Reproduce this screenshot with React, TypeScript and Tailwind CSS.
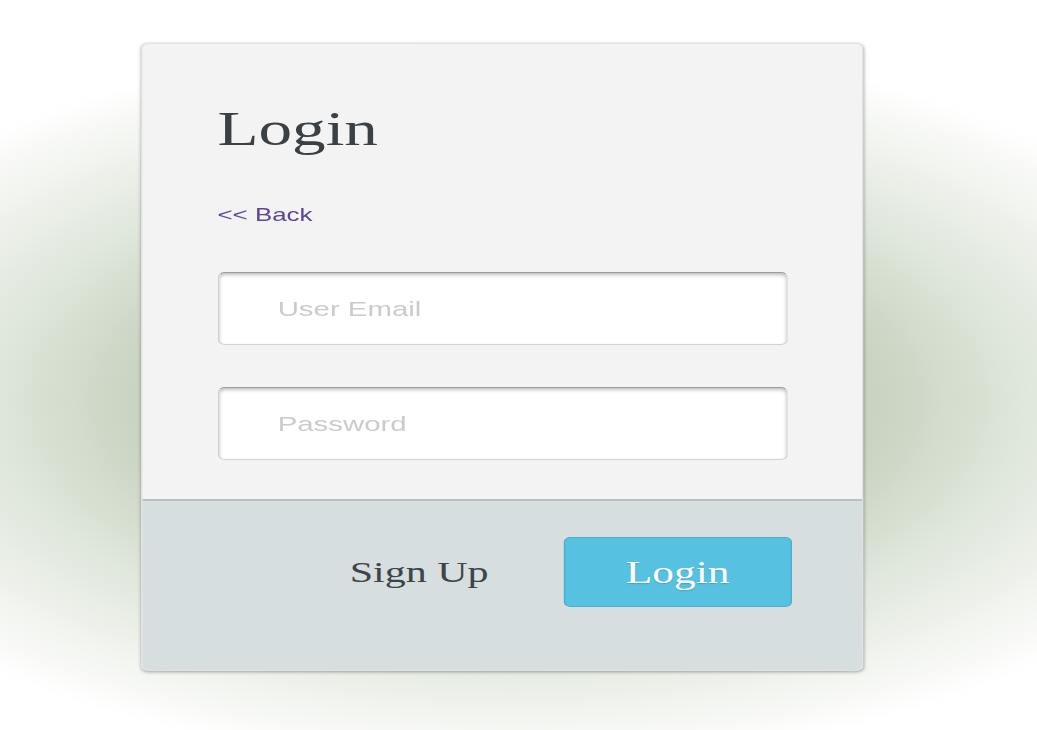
import React from "react";

const serif = { fontFamily: '"Liberation Serif", "Times New Roman", serif' };
const sans = { fontFamily: '"Liberation Sans", Arial, sans-serif' };

function Field({ placeholder, type }: { placeholder: string; type: string }) {
  return (
    <input
      type={type}
      placeholder={placeholder}
      className="block w-full h-[73px] rounded-[5px] border border-[#d2d2d2] border-t-[#9c9c9c] bg-white pl-[42px] text-[21px] text-[#555] shadow-[inset_0_2px_3px_rgba(0,0,0,0.25)] outline-none placeholder:text-[#cbcbcb]"
      style={sans}
    />
  );
}

export default function App() {
  return (
    <div className="w-[1037px] h-[730px] overflow-hidden bg-white bg-[radial-gradient(ellipse_74%_50%_at_49%_55%,#b2c3a6_0%,#c9d3c1_48%,#e0e7dc_68%,#f4f6f2_88%,#ffffff_100%)] pt-[43px] pl-[141px]">
      <div className="w-[516.4px] h-[628px] origin-top-left scale-x-[1.4] rounded-[5px] border border-[#e2e2e2] bg-[#f3f3f3] shadow-[0_1px_3px_rgba(0,0,0,0.35)] overflow-hidden flex flex-col">
        <div className="h-[455px] px-[53.6px] pt-[61px]">
          <h1 className="text-[48px] leading-[48px] text-[#3b4045]" style={serif}>
            Login
          </h1>
          <a href="#" className="block mt-[52px] text-[18.5px] leading-[20px] text-[#5e4594]" style={sans}>
            &lt;&lt; Back
          </a>
          <div className="mt-[47px] flex flex-col gap-[42px]">
            <Field placeholder="User Email" type="email" />
            <Field placeholder="Password" type="password" />
          </div>
        </div>
        <div className="flex-1 border-t-2 border-[#b9bebf] bg-[#d6dedf] flex items-start justify-end gap-[53.5px] pr-[50.6px] pt-[36px]">
          <button className="mt-[20px] text-[30px] leading-[30px] text-[#3e4448]" style={serif}>
            Sign Up
          </button>
          <button
            className="w-[163px] h-[70px] rounded-[5px] border border-[#4aaed0] bg-[#56c1e1] text-[31px] leading-[31px] text-white [text-shadow:0_1px_1px_rgba(0,0,0,0.15)]"
            style={serif}
          >
            Login
          </button>
        </div>
      </div>
    </div>
  );
}
